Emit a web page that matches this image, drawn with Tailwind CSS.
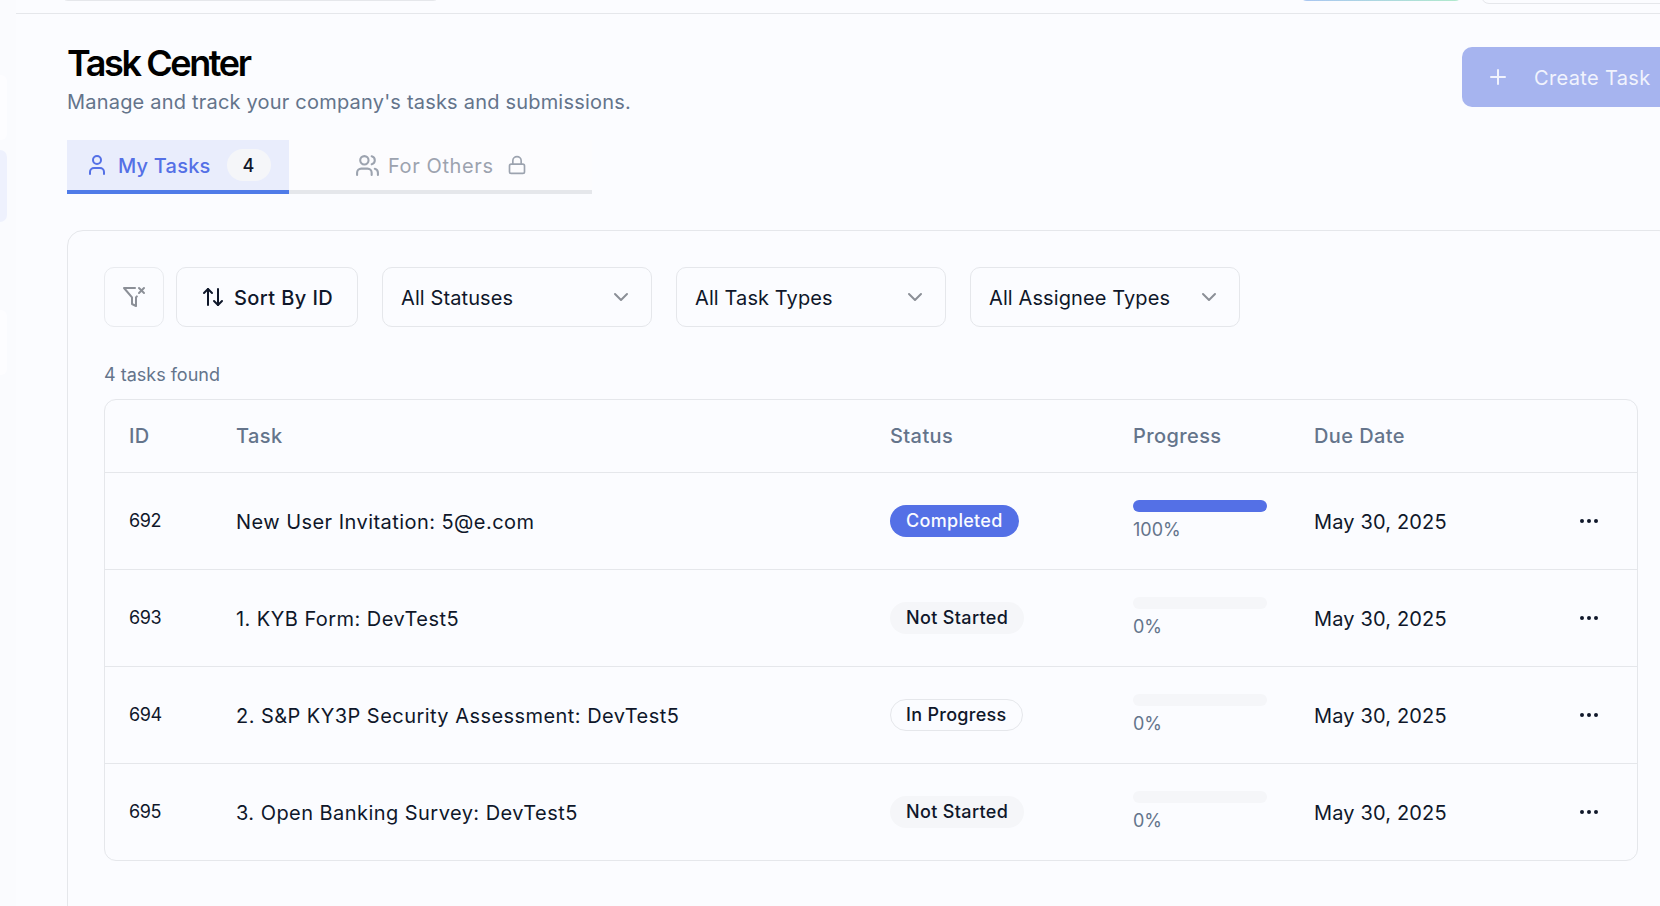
<!DOCTYPE html>
<html lang="en">
<head>
    <meta charset="UTF-8">
    <title>Task Center</title>
    <script src="https://cdn.jsdelivr.net/npm/@tailwindcss/browser@4"></script>
</head>
<body class="bg-[#fbfcff] font-['Inter',sans-serif] text-[#0f172a] h-[906px] overflow-hidden flex">
    <aside class="w-[16px] shrink-0 bg-[#fafbfe] pt-[75px] flex flex-col">
        <div class="w-[7px] h-[65px] rounded-r-md bg-[#fdfdff]"></div>
        <div class="w-[7px] h-[72px] mt-[10px] rounded-r-lg bg-[#eef1fd]"></div>
        <div class="w-[7px] h-[65px] mt-[88px] rounded-r-md bg-[#fdfdff]"></div>
    </aside>

    <div class="flex-1 min-w-0 overflow-hidden">
        <header class="h-[14px] border-b border-[#e5e7eb] flex items-start overflow-hidden">
            <div class="ml-[44px] w-[381px] h-[40px] -mt-[39px] shrink-0 rounded-lg border border-[#e5e7eb]"></div>
            <div class="ml-[858px] w-[164px] h-[40px] -mt-[39px] shrink-0 rounded-lg bg-gradient-to-r from-[#a9c5f2] to-[#b0eacb]"></div>
            <div class="ml-[18px] w-[200px] h-[40px] -mt-[36px] shrink-0 rounded-lg border border-[#e5e7eb]"></div>
        </header>

        <main class="pl-[51px] w-[1659px]">
            <div class="flex justify-between items-start">
                <div>
                    <h1 class="text-[36px] leading-[40px] font-semibold tracking-[-2.4px] text-black mt-[29px]">Task Center</h1>
                    <p class="text-[20px] leading-[28px] text-[#64748b] tracking-[0.2px] mt-[5px]">Manage and track your company's tasks and submissions.</p>
                </div>
                <button class="mt-[33px] w-[213px] h-[60px] rounded-[10px] bg-[#a6b4ef] text-[#f1f3fd] text-[20px] tracking-[0.35px] flex items-center pl-[24px] gap-[24px] shrink-0">
                    <svg class="w-[24px] h-[24px]" viewBox="0 0 24 24" fill="none" stroke="currentColor" stroke-width="2" stroke-linecap="round" stroke-linejoin="round"><path d="M5 12h14"/><path d="M12 5v14"/></svg>
                    <span class="pt-[1px]">Create Task</span>
                </button>
            </div>

            <div class="flex mt-[24px] text-[20px] font-medium">
                <div class="w-[222px] h-[54px] bg-[#e9edfc] border-b-4 border-[#4f7be8] text-[#5470e6] tracking-[0.2px] flex items-center pl-[18px]">
                    <svg class="w-[24px] h-[24px]" viewBox="0 0 24 24" fill="none" stroke="currentColor" stroke-width="2" stroke-linecap="round" stroke-linejoin="round"><path d="M19 21v-2a4 4 0 0 0-4-4H9a4 4 0 0 0-4 4v2"/><circle cx="12" cy="7" r="4"/></svg>
                    <span class="ml-[9px] pt-[1px]">My Tasks</span>
                    <span class="ml-[16px] w-[44px] h-[32px] rounded-full bg-[#f5f6f9] text-[#0f172a] text-[18px] flex items-center justify-center">4</span>
                </div>
                <div class="w-[303px] h-[54px] bg-[#fcfcfe] border-b-4 border-[#e5e7eb] text-[#9ca3af] font-normal tracking-[0.6px] flex items-center pl-[66px]">
                    <svg class="w-[25px] h-[25px]" viewBox="0 0 24 24" fill="none" stroke="currentColor" stroke-width="2" stroke-linecap="round" stroke-linejoin="round"><path d="M16 21v-2a4 4 0 0 0-4-4H6a4 4 0 0 0-4 4v2"/><circle cx="9" cy="7" r="4"/><path d="M22 21v-2a4 4 0 0 0-3-3.87"/><path d="M16 3.13a4 4 0 0 1 0 7.75"/></svg>
                    <span class="ml-[8px] pt-[1px]">For Others</span>
                    <svg class="ml-[13px] w-[20px] h-[20px]" viewBox="0 0 24 24" fill="none" stroke="currentColor" stroke-width="2" stroke-linecap="round" stroke-linejoin="round"><rect x="3" y="11" width="18" height="11" rx="2"/><path d="M7 11V7a5 5 0 0 1 10 0v4"/></svg>
                </div>
            </div>

            <section class="mt-[36px] border border-[#e5e7eb] rounded-2xl px-[36px] pt-[36px] h-[800px]">
                <div class="flex text-[20px] tracking-[0.1px]">
                    <button class="w-[60px] h-[60px] rounded-[10px] border border-[#e9ebef] flex items-center justify-center text-[#8b8f97]">
                        <svg class="w-[24px] h-[24px]" viewBox="0 0 24 24" fill="none" stroke="currentColor" stroke-width="2" stroke-linecap="round" stroke-linejoin="round"><path d="M13.013 3H2l8 9.46V19l4 2v-8.54l.9-1.055"/><path d="m22 3-5 5"/><path d="m17 3 5 5"/></svg>
                    </button>
                    <button class="ml-[12px] w-[182px] h-[60px] rounded-[10px] border border-[#e5e7eb] flex items-center pl-[24px] gap-[9px] font-medium tracking-[0.4px]">
                        <svg class="w-[24px] h-[24px]" viewBox="0 0 24 24" fill="none" stroke="currentColor" stroke-width="2" stroke-linecap="round" stroke-linejoin="round"><path d="m21 16-4 4-4-4"/><path d="M17 20V4"/><path d="m3 8 4-4 4 4"/><path d="M7 4v16"/></svg>
                        <span class="pt-[1px]">Sort By ID</span>
                    </button>
                    <div class="ml-[24px] w-[270px] h-[60px] rounded-[10px] border border-[#e5e7eb] flex items-center justify-between pl-[18px] pr-[18px]">
                        <span class="pt-[1px]">All Statuses</span>
                        <svg class="w-[24px] h-[24px] text-[#8b8f97]" viewBox="0 0 24 24" fill="none" stroke="currentColor" stroke-width="2" stroke-linecap="round" stroke-linejoin="round"><path d="m6 9 6 6 6-6"/></svg>
                    </div>
                    <div class="ml-[24px] w-[270px] h-[60px] rounded-[10px] border border-[#e5e7eb] flex items-center justify-between pl-[18px] pr-[18px]">
                        <span class="pt-[1px]">All Task Types</span>
                        <svg class="w-[24px] h-[24px] text-[#8b8f97]" viewBox="0 0 24 24" fill="none" stroke="currentColor" stroke-width="2" stroke-linecap="round" stroke-linejoin="round"><path d="m6 9 6 6 6-6"/></svg>
                    </div>
                    <div class="ml-[24px] w-[270px] h-[60px] rounded-[10px] border border-[#e5e7eb] flex items-center justify-between pl-[18px] pr-[18px]">
                        <span class="pt-[1px]">All Assignee Types</span>
                        <svg class="w-[24px] h-[24px] text-[#8b8f97]" viewBox="0 0 24 24" fill="none" stroke="currentColor" stroke-width="2" stroke-linecap="round" stroke-linejoin="round"><path d="m6 9 6 6 6-6"/></svg>
                    </div>
                </div>

                <p class="mt-[34px] text-[18px] leading-[28px] text-[#64748b]">4 tasks found</p>

                <div class="mt-[10px] border border-[#e5e7eb] rounded-xl overflow-hidden">
                    <table class="w-full table-fixed text-left text-[20px]">
                        <thead class="text-[#64748b] tracking-[0.4px]">
                            <tr class="h-[72px] border-b border-[#e5e7eb]">
                                <th class="w-[131px] pl-[24px] pt-[1px] font-medium">ID</th>
                                <th class="w-[654px] pt-[1px] font-medium">Task</th>
                                <th class="w-[243px] pt-[1px] font-medium">Status</th>
                                <th class="w-[181px] pt-[1px] font-medium">Progress</th>
                                <th class="pt-[1px] font-medium">Due Date</th>
                                <th class="w-[75px]"></th>
                            </tr>
                        </thead>
                        <tbody>
                            <tr class="h-[97px] border-b border-[#e5e7eb]">
                                <td class="pl-[24px] text-[18px] tracking-[-0.4px]">692</td>
                                <td class="pt-[2px] tracking-[0.45px]">New User Invitation: 5@e.com</td>
                                <td><span class="inline-flex items-center h-[32px] px-[16px] rounded-full bg-[#5470e6] text-[#fafbff] text-[18px] font-[550] tracking-[0.3px]">Completed</span></td>
                                <td class="pt-[3px]">
                                    <div class="w-[134px] h-[12px] rounded-full bg-[#5470e6]"></div>
                                    <div class="mt-[4px] text-[18px] leading-[28px] text-[#64748b]">100%</div>
                                </td>
                                <td class="pt-[2px] tracking-[0.15px]">May 30, 2025</td>
                                <td class="pl-[15px]">
                                    <svg class="w-[24px] h-[24px]" viewBox="0 0 24 24" fill="currentColor" stroke="currentColor" stroke-width="2" stroke-linecap="round" stroke-linejoin="round"><circle cx="12" cy="12" r="1"/><circle cx="19" cy="12" r="1"/><circle cx="5" cy="12" r="1"/></svg>
                                </td>
                            </tr>
                            <tr class="h-[97px] border-b border-[#e5e7eb]">
                                <td class="pl-[24px] text-[18px] tracking-[-0.4px]">693</td>
                                <td class="pt-[2px] tracking-[0.45px]">1. KYB Form: DevTest5</td>
                                <td><span class="inline-flex items-center h-[32px] px-[16px] rounded-full bg-[#f5f6f9] text-[18px] font-[550] tracking-[0.35px]">Not Started</span></td>
                                <td class="pt-[3px]">
                                    <div class="w-[134px] h-[12px] rounded-full bg-[#f5f6f9]"></div>
                                    <div class="mt-[4px] text-[18px] leading-[28px] text-[#64748b]">0%</div>
                                </td>
                                <td class="pt-[2px] tracking-[0.15px]">May 30, 2025</td>
                                <td class="pl-[15px]">
                                    <svg class="w-[24px] h-[24px]" viewBox="0 0 24 24" fill="currentColor" stroke="currentColor" stroke-width="2" stroke-linecap="round" stroke-linejoin="round"><circle cx="12" cy="12" r="1"/><circle cx="19" cy="12" r="1"/><circle cx="5" cy="12" r="1"/></svg>
                                </td>
                            </tr>
                            <tr class="h-[97px] border-b border-[#e5e7eb]">
                                <td class="pl-[24px] text-[18px] tracking-[-0.4px]">694</td>
                                <td class="pt-[2px] tracking-[0.45px]">2. S&amp;P KY3P Security Assessment: DevTest5</td>
                                <td><span class="inline-flex items-center h-[32px] px-[15px] rounded-full border border-[#e5e7eb] text-[18px] font-[550] tracking-[0.3px]">In Progress</span></td>
                                <td class="pt-[3px]">
                                    <div class="w-[134px] h-[12px] rounded-full bg-[#f5f6f9]"></div>
                                    <div class="mt-[4px] text-[18px] leading-[28px] text-[#64748b]">0%</div>
                                </td>
                                <td class="pt-[2px] tracking-[0.15px]">May 30, 2025</td>
                                <td class="pl-[15px]">
                                    <svg class="w-[24px] h-[24px]" viewBox="0 0 24 24" fill="currentColor" stroke="currentColor" stroke-width="2" stroke-linecap="round" stroke-linejoin="round"><circle cx="12" cy="12" r="1"/><circle cx="19" cy="12" r="1"/><circle cx="5" cy="12" r="1"/></svg>
                                </td>
                            </tr>
                            <tr class="h-[97px]">
                                <td class="pl-[24px] text-[18px] tracking-[-0.4px]">695</td>
                                <td class="pt-[2px] tracking-[0.45px]">3. Open Banking Survey: DevTest5</td>
                                <td><span class="inline-flex items-center h-[32px] px-[16px] rounded-full bg-[#f5f6f9] text-[18px] font-[550] tracking-[0.35px]">Not Started</span></td>
                                <td class="pt-[3px]">
                                    <div class="w-[134px] h-[12px] rounded-full bg-[#f5f6f9]"></div>
                                    <div class="mt-[4px] text-[18px] leading-[28px] text-[#64748b]">0%</div>
                                </td>
                                <td class="pt-[2px] tracking-[0.15px]">May 30, 2025</td>
                                <td class="pl-[15px]">
                                    <svg class="w-[24px] h-[24px]" viewBox="0 0 24 24" fill="currentColor" stroke="currentColor" stroke-width="2" stroke-linecap="round" stroke-linejoin="round"><circle cx="12" cy="12" r="1"/><circle cx="19" cy="12" r="1"/><circle cx="5" cy="12" r="1"/></svg>
                                </td>
                            </tr>
                        </tbody>
                    </table>
                </div>
            </section>
        </main>
    </div>
</body>
</html>
